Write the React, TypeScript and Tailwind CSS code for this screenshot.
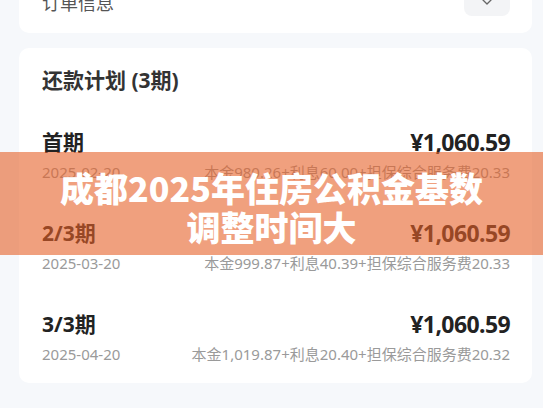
import { ChevronDown } from 'lucide-react';

interface Installment {
    label: string;
    date: string;
    amount: string;
    principal: string;
    interest: string;
    fee: string;
}

const installments: Installment[] = [
    { label: '首期', date: '2025-02-20', amount: '¥1,060.59', principal: '980.26', interest: '60.00', fee: '20.33' },
    { label: '2/3期', date: '2025-03-20', amount: '¥1,060.59', principal: '999.87', interest: '40.39', fee: '20.33' },
    { label: '3/3期', date: '2025-04-20', amount: '¥1,060.59', principal: '1,019.87', interest: '20.40', fee: '20.32' },
];

const sans = 'font-["Noto_Sans","Noto_Sans_CJK_SC",sans-serif]';

function InstallmentRow({ item }: { item: Installment }) {
    return (
        <div className="flex flex-col gap-[7px]">
            <div className="flex h-[24px] items-center justify-between">
                <span className="text-[21px] font-bold leading-[24px] text-[#222]">{item.label}</span>
                <span className="text-[23px] font-bold leading-[24px] tracking-[-0.6px] text-[#222]">{item.amount}</span>
            </div>
            <div className="flex h-[22px] items-center justify-between text-[15px] leading-[22px] text-[#9a9a9a]">
                <span>{item.date}</span>
                <span>
                    本金{item.principal}+利息{item.interest}+担保综合服务费{item.fee}
                </span>
            </div>
        </div>
    );
}

export default function App() {
    return (
        <div className={`relative h-[408px] w-[543px] overflow-hidden bg-[#f6f8fb] ${sans}`}>
            <div className="mt-[-33px] flex flex-col gap-[15px] pl-[19px] pr-[11px]">
                {/* Order info (collapsed) */}
                <div className="flex items-center justify-between rounded-[10px] bg-white py-[17px] pl-[23px] pr-[22px]">
                    <span className="translate-y-[3px] text-[18px] leading-[32px] text-[#555]">订单信息</span>
                    <div className="flex h-[32px] w-[46px] items-center justify-center rounded-[8px] bg-[#f3f4f6]">
                        <ChevronDown className="h-[16px] w-[16px] translate-y-[2px] text-[#666]" strokeWidth={2} />
                    </div>
                </div>

                {/* Repayment plan */}
                <div className="flex flex-col rounded-[10px] bg-white pb-[18px] pl-[23px] pr-[22px] pt-[18px]">
                    <h2 className="text-[21px] font-bold leading-[28px] text-[#333]">还款计划 (3期)</h2>
                    <div className="mt-[36px] flex flex-col gap-[38px]">
                        {installments.map((item) => (
                            <InstallmentRow key={item.label} item={item} />
                        ))}
                    </div>
                </div>
            </div>

            {/* Headline banner */}
            <div className="absolute left-0 right-0 top-[152px] flex h-[103px] flex-col items-center justify-center bg-[rgba(230,97,40,0.6)] pt-[6px]">
                <p className='font-["Noto_Sans_CJK_SC",sans-serif] text-[34px] font-black leading-[39px] text-white'>成都2025年住房公积金基数</p>
                <p className='font-["Noto_Sans_CJK_SC",sans-serif] text-[34px] font-black leading-[39px] text-white'>调整时间大</p>
            </div>
        </div>
    );
}
